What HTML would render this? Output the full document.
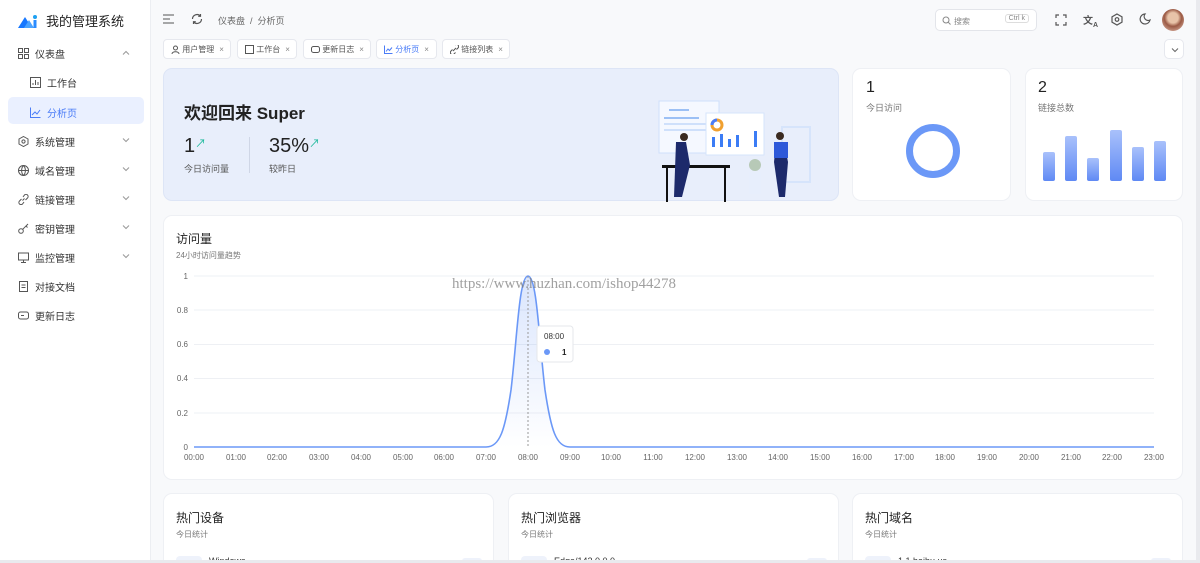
<!DOCTYPE html>
<html><head><meta charset="utf-8"><style>
*{box-sizing:border-box;margin:0;padding:0}
html,body{width:1200px;height:563px;overflow:hidden}
body{background:#f8f9fb;font-family:"Liberation Sans","Noto Sans CJK SC",sans-serif;color:#333;position:relative}
.sb{position:absolute;left:0;top:0;width:151px;height:563px;background:#fff;border-right:1px solid #eceef2}
.logo{position:absolute;left:18px;top:11px;display:flex;align-items:center;font-size:13px;color:#222}
.mi{position:absolute;left:18px;font-size:10px;color:#333;display:flex;align-items:center}
.mi svg{margin-right:6px}
.chev{position:absolute;left:122px}
.act{position:absolute;left:8px;top:97px;width:136px;height:27px;background:#eaf0ff;border-radius:5px}
.card{position:absolute;background:#fff;border-radius:9px;border:1px solid #eef0f4}
.tab{position:absolute;top:39px;height:20px;background:#fff;border:1px solid #e6e8ee;border-radius:4px;font-size:8px;color:#555;display:flex;align-items:center;padding-left:7px}
.tab .x{margin-left:5px;color:#888}
.t{position:absolute}
</style></head><body>
<div class="sb">
 <div class="logo"><svg width="20" height="14" viewBox="0 0 20 14"><path d="M0 14 L7 3 L14 14Z" fill="#1677ff"/><path d="M6 14 L11 6 L16 14Z" fill="#4aa3ff"/><circle cx="17" cy="3" r="2" fill="#1da1f2"/><rect x="15.5" y="6" width="3" height="8" fill="#2b8cff"/></svg><span style="margin-left:8px">我的管理系统</span></div>
 <div class="mi" style="top:46px"><svg width="11" height="11" viewBox="0 0 11 11" fill="none" stroke="#555"><rect x=".5" y=".5" width="4" height="4"/><rect x="6.5" y=".5" width="4" height="4"/><rect x=".5" y="6.5" width="4" height="4"/><rect x="6.5" y="6.5" width="4" height="4"/></svg>仪表盘</div>
 <svg class="chev" style="top:50px" width="8" height="5" fill="none" stroke="#999"><path d="M1 4.5L4 1.5L7 4.5"/></svg>
 <div class="mi" style="left:30px;top:75px"><svg width="11" height="11" viewBox="0 0 11 11" fill="none" stroke="#555"><rect x=".5" y=".5" width="10" height="10"/><path d="M3 8V6M5.5 8V3M8 8V5"/></svg>工作台</div>
 <div class="act"></div>
 <div class="mi" style="left:30px;top:105px;color:#4a7cf7"><svg width="11" height="11" viewBox="0 0 11 11" fill="none" stroke="#4a7cf7"><path d="M.5 .5V10.5H10.5M2 8L5 5L7 7L10 3"/></svg>分析页</div>
 <div class="mi" style="top:134px"><svg width="11" height="11" viewBox="0 0 11 11" fill="none" stroke="#555"><path d="M5.5 .5L10 3V8L5.5 10.5L1 8V3Z"/><circle cx="5.5" cy="5.5" r="1.6"/></svg>系统管理</div>
 <svg class="chev" style="top:138px" width="8" height="5" fill="none" stroke="#999"><path d="M1 .5L4 3.5L7 .5"/></svg>
 <div class="mi" style="top:163px"><svg width="11" height="11" viewBox="0 0 11 11" fill="none" stroke="#555"><circle cx="5.5" cy="5.5" r="5"/><path d="M.5 5.5H10.5M5.5 .5C3 3 3 8 5.5 10.5C8 8 8 3 5.5 .5"/></svg>域名管理</div>
 <svg class="chev" style="top:167px" width="8" height="5" fill="none" stroke="#999"><path d="M1 .5L4 3.5L7 .5"/></svg>
 <div class="mi" style="top:192px"><svg width="11" height="11" viewBox="0 0 11 11" fill="none" stroke="#555"><path d="M4.5 6.5L6.5 4.5M3.5 5L1.5 7a2 2 0 003 3L6 8M7.5 6l2-2a2 2 0 00-3-3L5 3"/></svg>链接管理</div>
 <svg class="chev" style="top:196px" width="8" height="5" fill="none" stroke="#999"><path d="M1 .5L4 3.5L7 .5"/></svg>
 <div class="mi" style="top:221px"><svg width="11" height="11" viewBox="0 0 11 11" fill="none" stroke="#555"><circle cx="3" cy="8" r="2.3"/><path d="M4.7 6.3L10 1M8 3L9.5 4.5"/></svg>密钥管理</div>
 <svg class="chev" style="top:225px" width="8" height="5" fill="none" stroke="#999"><path d="M1 .5L4 3.5L7 .5"/></svg>
 <div class="mi" style="top:250px"><svg width="11" height="11" viewBox="0 0 11 11" fill="none" stroke="#555"><rect x=".5" y="1" width="10" height="7"/><path d="M5.5 8V10M3 10.5H8"/></svg>监控管理</div>
 <svg class="chev" style="top:254px" width="8" height="5" fill="none" stroke="#999"><path d="M1 .5L4 3.5L7 .5"/></svg>
 <div class="mi" style="top:279px"><svg width="11" height="11" viewBox="0 0 11 11" fill="none" stroke="#555"><rect x="1.5" y=".5" width="8" height="10"/><path d="M3.5 4H7.5M3.5 6.5H7.5"/></svg>对接文档</div>
 <div class="mi" style="top:308px"><svg width="11" height="11" viewBox="0 0 11 11" fill="none" stroke="#555"><rect x=".5" y="2" width="10" height="7" rx="2"/><path d="M3 5.5H6"/></svg>更新日志</div>
</div>

<svg class="t" style="left:163px;top:14px" width="11" height="10" fill="none" stroke="#555" stroke-width="1.1"><path d="M0 1H11M0 5H7M0 9H11"/></svg>
<svg class="t" style="left:191px;top:13px" width="12" height="12" viewBox="0 0 12 12" fill="none" stroke="#555" stroke-width="1.2"><path d="M10.5 6A4.5 4.5 0 012.5 8.8M1.5 6A4.5 4.5 0 019.5 3.2M9.5 1V3.3H7.2M2.5 11V8.7H4.8"/></svg>
<div class="t" style="left:218px;top:14px;font-size:9px;color:#666">仪表盘 &nbsp;/ &nbsp;分析页</div>
<div class="t" style="left:935px;top:9px;width:102px;height:22px;border:1px solid #e3e5ea;border-radius:5px;background:#fff;font-size:8px;color:#888;padding:6px 0 0 18px">搜索<svg style="position:absolute;left:6px;top:6px" width="9" height="9" fill="none" stroke="#888"><circle cx="4" cy="4" r="3"/><path d="M6.2 6.2L8.5 8.5"/></svg><span style="position:absolute;right:7px;top:4px;border:1px solid #ddd;border-radius:3px;padding:0 3px;font-size:7px">Ctrl k</span></div>
<svg class="t" style="left:1055px;top:14px" width="12" height="12" fill="none" stroke="#555" stroke-width="1.2"><path d="M1 4V1H4M8 1H11V4M11 8V11H8M4 11H1V8"/></svg>
<div class="t" style="left:1083px;top:12px;font-size:10px;color:#555;font-weight:bold">文<sub style="font-size:7px">A</sub></div>
<svg class="t" style="left:1111px;top:13px" width="12" height="13" fill="none" stroke="#555" stroke-width="1.2"><path d="M6 1L11 3.8V9.2L6 12L1 9.2V3.8Z"/><circle cx="6" cy="6.5" r="1.8"/></svg>
<svg class="t" style="left:1139px;top:13px" width="12" height="12" fill="none" stroke="#555" stroke-width="1.2"><path d="M6 1A5 5 0 1011 7 4 4 0 016 1Z"/></svg>
<div class="t" style="left:1162px;top:9px;width:22px;height:22px;border-radius:50%;background:radial-gradient(circle at 50% 40%,#e8c3a8 0 30%,#9b5a45 50%,#c99a88 80%)"></div>

<div class="tab" style="left:163px;width:68px"><svg width="9" height="9" fill="none" stroke="#555"><circle cx="4.5" cy="3" r="2"/><path d="M1 9C1 6 8 6 8 9"/></svg>&nbsp;用户管理<span class="x">×</span></div>
<div class="tab" style="left:237px;width:60px"><svg width="9" height="9" fill="none" stroke="#555"><rect x=".5" y=".5" width="8" height="8"/></svg>&nbsp;工作台<span class="x">×</span></div>
<div class="tab" style="left:303px;width:68px"><svg width="9" height="9" fill="none" stroke="#555"><rect x=".5" y="1.5" width="8" height="6" rx="2"/></svg>&nbsp;更新日志<span class="x">×</span></div>
<div class="tab" style="left:376px;width:61px;color:#4a7cf7"><svg width="9" height="9" fill="none" stroke="#4a7cf7"><path d="M.5 .5V8.5H8.5M2 6.5L4 4L5.5 5.5L8 2.5"/></svg>&nbsp;分析页<span class="x">×</span></div>
<div class="tab" style="left:442px;width:68px"><svg width="9" height="9" fill="none" stroke="#555"><path d="M3 6L6 3M2.5 4.5L1 6a1.5 1.5 0 003 3L5.5 7.5M6.5 4.5L8 3a1.5 1.5 0 00-3-3"/></svg>&nbsp;链接列表<span class="x">×</span></div>
<div class="t" style="left:1164px;top:39px;width:20px;height:20px;border:1px solid #e6e8ee;border-radius:5px;background:#fff"><svg style="position:absolute;left:6px;top:8px" width="8" height="5" fill="none" stroke="#666"><path d="M1 .5L4 3.5L7 .5"/></svg></div>

<div class="card" style="left:163px;top:68px;width:676px;height:133px;background:#e8eefb;border-color:#dde5f6">
 <div class="t" style="left:20px;top:30px;font-size:17px;font-weight:bold;color:#222">欢迎回来 Super</div>
 <div class="t" style="left:20px;top:66px;font-size:20px;color:#222">1<span style="font-size:11px;color:#19b89a;vertical-align:top">↗</span></div>
 <div class="t" style="left:20px;top:93px;font-size:9px;color:#555">今日访问量</div>
 <div class="t" style="left:85px;top:68px;width:1px;height:36px;background:#cfd6e6"></div>
 <div class="t" style="left:105px;top:66px;font-size:20px;color:#222">35%<span style="font-size:11px;color:#19b89a;vertical-align:top">↗</span></div>
 <div class="t" style="left:105px;top:93px;font-size:9px;color:#555">较昨日</div>
 <svg class="t" style="left:490px;top:18px" width="160" height="115" viewBox="0 0 160 115">
  <rect x="5" y="14" width="60" height="52" fill="#f5f8ff" stroke="#cfe0fb"/><rect x="15" y="22" width="20" height="2" fill="#9cc0f5"/><rect x="10" y="30" width="35" height="2" fill="#9cc0f5"/><rect x="10" y="36" width="45" height="2" fill="#cfe0fb"/><rect x="10" y="42" width="45" height="2" fill="#cfe0fb"/>
  <rect x="52" y="26" width="58" height="42" fill="#fff" stroke="#d6e4fb"/><circle cx="63" cy="38" r="5" fill="none" stroke="#f0a030" stroke-width="3"/><path d="M58 38a5 5 0 015-5" stroke="#4a7cf7" stroke-width="3" fill="none"/>
  <rect x="58" y="50" width="3" height="10" fill="#3b7cf5"/><rect x="66" y="47" width="3" height="13" fill="#3b7cf5"/><rect x="74" y="52" width="3" height="8" fill="#3b7cf5"/><rect x="82" y="48" width="3" height="12" fill="#3b7cf5"/><rect x="100" y="44" width="3" height="16" fill="#3b7cf5"/>
  <rect x="128" y="40" width="28" height="55" fill="none" stroke="#d6e4fb" stroke-width="2"/>
  <rect x="8" y="78" width="68" height="3" fill="#111"/><rect x="12" y="80" width="2" height="35" fill="#111"/><rect x="70" y="80" width="2" height="35" fill="#111"/>
  <path d="M22 55L32 55L36 78L28 110L20 110Z" fill="#1d2a6b"/><circle cx="30" cy="50" r="4" fill="#3a2a20"/>
  <rect x="95" y="85" width="12" height="22" fill="#e7eefc"/><circle cx="101" cy="78" r="6" fill="#b7c9b7"/>
  <path d="M122 55L130 55L134 75L131 110L125 110L120 75Z" fill="#1d2a6b"/><circle cx="126" cy="49" r="4" fill="#3a2a20"/><rect x="120" y="55" width="14" height="16" fill="#2e59d9"/>
 </svg>
</div>
<div class="card" style="left:852px;top:68px;width:159px;height:133px">
 <div class="t" style="left:13px;top:10px;font-size:16px;color:#222">1</div>
 <div class="t" style="left:13px;top:32px;font-size:9px;color:#777">今日访问</div>
 <div class="t" style="left:53px;top:55px;width:54px;height:54px;border-radius:50%;border:7px solid #6b98f7"></div>
</div>
<div class="card" style="left:1025px;top:68px;width:158px;height:133px">
 <div class="t" style="left:12px;top:10px;font-size:16px;color:#222">2</div>
 <div class="t" style="left:12px;top:32px;font-size:9px;color:#777">链接总数</div>
 <svg class="t" style="left:17px;top:60px" width="124" height="60"><defs><linearGradient id="g" x1="0" y1="0" x2="0" y2="1"><stop offset="0" stop-color="#a9c1fb"/><stop offset="1" stop-color="#5f89f4"/></linearGradient></defs>
 <rect x="0" y="23" width="12" height="29" rx="2" fill="url(#g)"/><rect x="22" y="7" width="12" height="45" rx="2" fill="url(#g)"/><rect x="44" y="29" width="12" height="23" rx="2" fill="url(#g)"/><rect x="67" y="1" width="12" height="51" rx="2" fill="url(#g)"/><rect x="89" y="18" width="12" height="34" rx="2" fill="url(#g)"/><rect x="111" y="12" width="12" height="40" rx="2" fill="url(#g)"/></svg>
</div>

<div class="card" style="left:163px;top:215px;width:1020px;height:265px">
 <div class="t" style="left:12px;top:14px;font-size:12px;color:#222">访问量</div>
 <div class="t" style="left:12px;top:34px;font-size:8px;color:#777">24小时访问量趋势</div>
</div>
<svg class="t" style="left:0;top:0" width="1200" height="480" font-family="Liberation Sans" font-size="8" fill="#666">
 <defs><linearGradient id="a" x1="0" y1="0" x2="0" y2="1"><stop offset="0" stop-color="#6b98f7" stop-opacity=".25"/><stop offset="1" stop-color="#6b98f7" stop-opacity="0"/></linearGradient></defs>
 <g stroke="#eef0f4"><line x1="194" x2="1154" y1="276" y2="276"/><line x1="194" x2="1154" y1="310" y2="310"/><line x1="194" x2="1154" y1="344.5" y2="344.5"/><line x1="194" x2="1154" y1="378.5" y2="378.5"/><line x1="194" x2="1154" y1="413" y2="413"/></g>
 <g text-anchor="end"><text x="188" y="279">1</text><text x="188" y="313">0.8</text><text x="188" y="347">0.6</text><text x="188" y="381">0.4</text><text x="188" y="416">0.2</text><text x="188" y="450">0</text></g>
 <g text-anchor="middle"><text x="194" y="460">00:00</text><text x="236" y="460">01:00</text><text x="277" y="460">02:00</text><text x="319" y="460">03:00</text><text x="361" y="460">04:00</text><text x="403" y="460">05:00</text><text x="444" y="460">06:00</text><text x="486" y="460">07:00</text><text x="528" y="460">08:00</text><text x="570" y="460">09:00</text><text x="611" y="460">10:00</text><text x="653" y="460">11:00</text><text x="695" y="460">12:00</text><text x="737" y="460">13:00</text><text x="778" y="460">14:00</text><text x="820" y="460">15:00</text><text x="862" y="460">16:00</text><text x="904" y="460">17:00</text><text x="945" y="460">18:00</text><text x="987" y="460">19:00</text><text x="1029" y="460">20:00</text><text x="1071" y="460">21:00</text><text x="1112" y="460">22:00</text><text x="1154" y="460">23:00</text></g>
 <path d="M194 447H486C500 447 505 430 511 390C517 340 519 276 528 276C537 276 539 340 545 390C551 430 556 447 570 447H1154V447.5H194Z" fill="url(#a)"/>
 <path d="M194 447H486C500 447 505 430 511 390C517 340 519 276 528 276C537 276 539 340 545 390C551 430 556 447 570 447H1154" fill="none" stroke="#6b98f7" stroke-width="1.6"/>
 <line x1="528" x2="528" y1="276" y2="447" stroke="#999" stroke-dasharray="2 2"/>
 <rect x="537" y="326" width="36" height="36" rx="3" fill="#fff" stroke="#e5e7eb"/><text x="544" y="339" fill="#333">08:00</text><circle cx="547" cy="352" r="3" fill="#6b98f7"/><text x="562" y="355" fill="#222" font-weight="bold">1</text>
 <text x="452" y="288" font-family="Liberation Serif" font-size="15" fill="#777" fill-opacity=".7">https://www.huzhan.com/ishop44278</text>
</svg>

<div class="card" style="left:163px;top:493px;width:331px;height:80px"><div class="t" style="left:12px;top:15px;font-size:12px;color:#222">热门设备</div><div class="t" style="left:12px;top:35px;font-size:8px;color:#777">今日统计</div><div class="t" style="left:12px;top:62px;width:26px;height:14px;background:#eef2fb;border-radius:4px"></div><div class="t" style="left:45px;top:62px;font-size:9px">Windows</div><div class="t" style="left:298px;top:64px;width:20px;height:10px;background:#eef2fb;border-radius:3px"></div></div>
<div class="card" style="left:508px;top:493px;width:331px;height:80px"><div class="t" style="left:12px;top:15px;font-size:12px;color:#222">热门浏览器</div><div class="t" style="left:12px;top:35px;font-size:8px;color:#777">今日统计</div><div class="t" style="left:12px;top:62px;width:26px;height:14px;background:#eef2fb;border-radius:4px"></div><div class="t" style="left:45px;top:62px;font-size:9px">Edge/142.0.0.0</div><div class="t" style="left:298px;top:64px;width:20px;height:10px;background:#eef2fb;border-radius:3px"></div></div>
<div class="card" style="left:852px;top:493px;width:331px;height:80px"><div class="t" style="left:12px;top:15px;font-size:12px;color:#222">热门域名</div><div class="t" style="left:12px;top:35px;font-size:8px;color:#777">今日统计</div><div class="t" style="left:12px;top:62px;width:26px;height:14px;background:#eef2fb;border-radius:4px"></div><div class="t" style="left:45px;top:62px;font-size:9px">1.1.baihu.us</div><div class="t" style="left:298px;top:64px;width:20px;height:10px;background:#eef2fb;border-radius:3px"></div></div>
<div class="t" style="left:0;top:560px;width:1200px;height:3px;background:#e9eaee"></div>
<div class="t" style="left:1196px;top:0;width:4px;height:563px;background:#e9eaee"></div>
</body></html>
